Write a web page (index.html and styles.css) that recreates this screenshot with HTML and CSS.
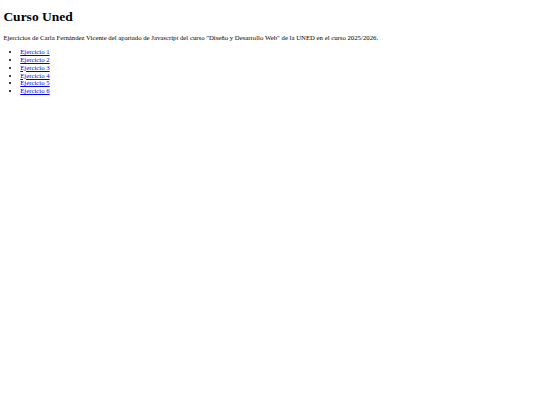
FILE: index.html
```html
<!DOCTYPE html>
<html lang="es">
<head>
<meta charset="utf-8">
<title>Curso Uned</title>
<link rel="stylesheet" href="styles.css">
</head>
<body class="page">
<h1 class="title">Curso Uned</h1>
<p class="intro">Ejercicios de Carla Fernández Vicente del apartado de Javascript del curso "Diseño y Desarrollo Web" de la UNED en el curso 2025/2026.</p>
<ul class="exercises">
<li><a href="ejercicio1.html">Ejercicio 1</a></li>
<li><a href="ejercicio2.html">Ejercicio 2</a></li>
<li><a href="ejercicio3.html">Ejercicio 3</a></li>
<li><a href="ejercicio4.html">Ejercicio 4</a></li>
<li><a href="ejercicio5.html">Ejercicio 5</a></li>
<li><a href="ejercicio6.html">Ejercicio 6</a></li>
</ul>
</body>
</html>
```
FILE: styles.css
```css
html {
  background: #ffffff;
}
.page {
  margin: 0;
  padding: 0 3.375px;
  font-family: "Liberation Serif", "Times New Roman", serif;
  font-size: 6.75px;
  line-height: 7.77px;
  color: #000000;
}
.title {
  font-size: 13.5px;
  line-height: 15.6px;
  font-weight: bold;
  margin: 9.05px 0;
}
.intro {
  margin: 6.75px 0;
}
.exercises {
  margin: 6.75px 0;
  padding-left: 16.875px;
  list-style: disc;
}
.exercises a {
  color: #0000ee;
  text-decoration: underline;
}
```
